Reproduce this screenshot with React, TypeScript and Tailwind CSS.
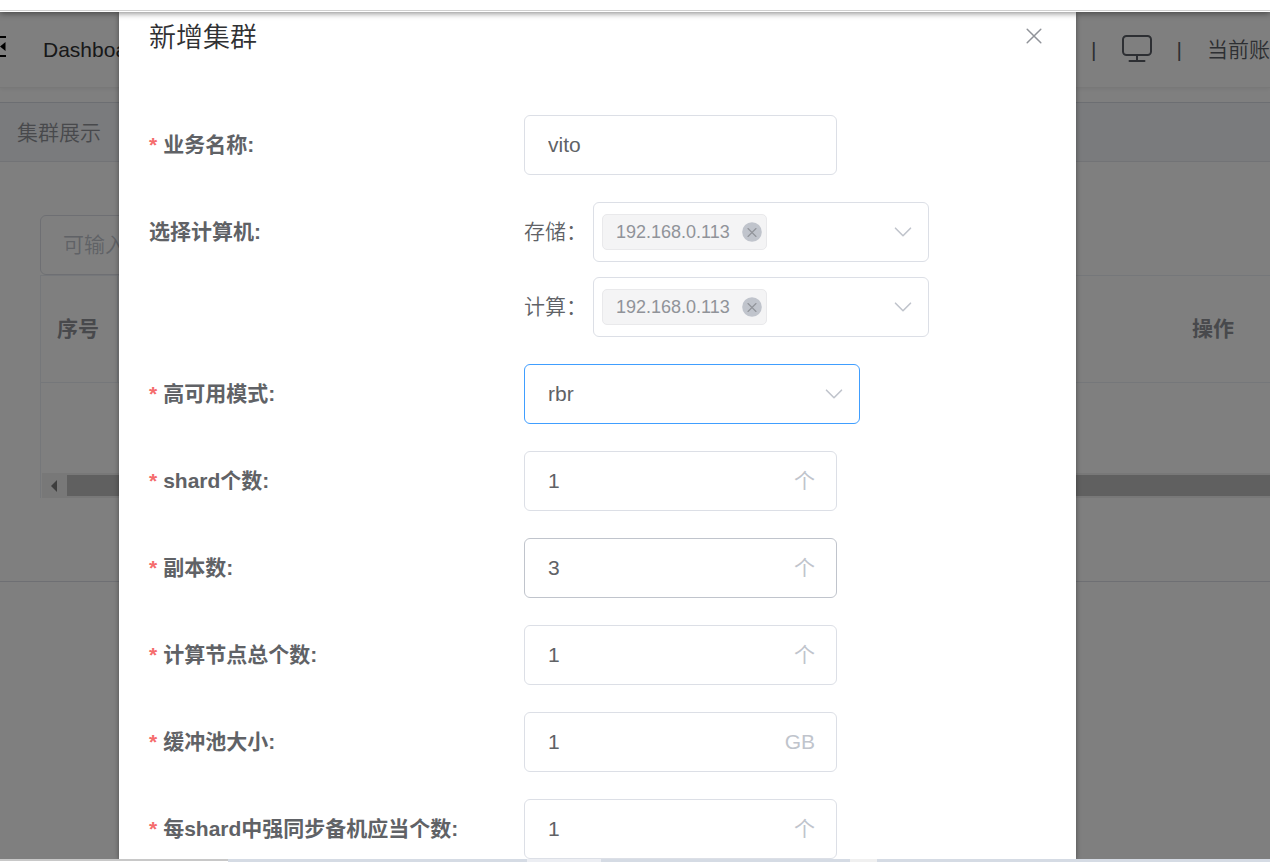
import { useState, type ReactNode } from 'react';

const ChevronDown = () => (
  <svg className="pointer-events-none h-[10px] w-[18px] shrink-0" viewBox="0 0 18 10" fill="none" stroke="#c0c4cc" strokeWidth="1.6" strokeLinecap="round" strokeLinejoin="round" aria-hidden="true">
    <path d="M1.5 1.2 9 8.7l7.5-7.5" />
  </svg>
);

const CloseIcon = () => (
  <svg className="size-4" viewBox="0 0 16 16" fill="none" stroke="#909399" strokeWidth="1.5" strokeLinecap="round" aria-hidden="true">
    <path d="M1.2 1.2l13.6 13.6M14.8 1.2 1.2 14.8" />
  </svg>
);

const TagCloseIcon = () => (
  <svg className="size-5" viewBox="0 0 20 20" fill="none" aria-hidden="true">
    <circle cx="10" cy="10" r="9.8" fill="#c0c4cc" />
    <path d="M6 6.5l8 8M14 6.5l-8 8" stroke="#909399" strokeWidth="1.1" strokeLinecap="round" />
  </svg>
);

const FoldIcon = () => (
  <svg className="h-7 w-1.5 shrink-0" viewBox="0 0 6 28" fill="#000" aria-hidden="true">
    <path d="M0 0h6v2H0zM0 19h6v2H0zM5.5 6v9L0 10.5z" />
  </svg>
);

const MonitorIcon = () => (
  <svg className="h-[30px] w-[30px] shrink-0" viewBox="0 0 30 30" fill="none" stroke="#5a5e66" strokeWidth="2" strokeLinecap="round" aria-hidden="true">
    <rect x="1" y="1" width="28" height="19" rx="3.5" />
    <path d="M15 20v6M7.5 26h15" />
  </svg>
);

type RowProps = { label: string; htmlFor?: string; required?: boolean; children: ReactNode };

function FormRow({ label, htmlFor, required, children }: RowProps) {
  return (
    <div className="flex items-start">
      <label htmlFor={htmlFor} className="w-[375px] shrink-0 font-bold leading-[60px] text-[#606266]">
        {required && <span className="mr-1.5 text-[#f56c6c]">*</span>}
        {label}
      </label>
      {children}
    </div>
  );
}

type FieldProps = { id: string; initial: string; suffix?: string; hovered?: boolean };

function Field({ id, initial, suffix, hovered }: FieldProps) {
  const [value, setValue] = useState(initial);
  return (
    <div className={`flex h-[60px] w-[313px] items-center rounded-md border bg-white pl-[23px] pr-[21px] ${hovered ? 'border-[#c0c4cc]' : 'border-[#dcdfe6]'}`}>
      <input id={id} value={value} onChange={(e) => setValue(e.target.value)} className="min-w-0 flex-1 bg-transparent text-[#606266] outline-none" />
      {suffix && <span className="font-normal text-[#c0c4cc]">{suffix}</span>}
    </div>
  );
}

function HostSelect({ id, label }: { id: string; label: string }) {
  const [hosts, setHosts] = useState(['192.168.0.113']);
  return (
    <div className="flex items-center gap-1.5">
      <label htmlFor={id} className="leading-[60px] text-[#606266]">{label}</label>
      <div className="flex h-[60px] w-[336px] items-center gap-2 rounded-md border border-[#dcdfe6] bg-white pl-2 pr-4">
        {hosts.map((host) => (
          <span key={host} className="flex h-9 shrink-0 items-center gap-3 rounded-[5px] border border-[#e9e9eb] bg-[#f4f4f5] pl-[13px] pr-1 text-[18px] text-[#909399]">
            {host}
            <button type="button" aria-label="移除" onClick={() => setHosts(hosts.filter((h) => h !== host))}>
              <TagCloseIcon />
            </button>
          </span>
        ))}
        <input id={id} className="min-w-0 flex-1 bg-transparent outline-none" />
        <ChevronDown />
      </div>
    </div>
  );
}

function ClusterPage() {
  return (
    <div className="flex h-full flex-col bg-white">
      <header className="flex h-[76px] shrink-0 items-center border-b border-[#f0f0f0] shadow-[0_1px_4px_rgba(0,21,41,0.08)]">
        <FoldIcon />
        <a href="#dashboard" className="ml-[37px] text-[#303133]">Dashboard</a>
        <div className="ml-auto flex items-center gap-[25px] whitespace-nowrap text-[#5a5e66]">
          <span>|</span>
          <MonitorIcon />
          <span>|</span>
          <span>当前账</span>
        </div>
      </header>
      <nav className="mt-[14px] flex h-[60px] shrink-0 items-center border-b border-t border-b-[#e4e7ed] border-t-[#d8dce5] bg-[#f5f7fa] pl-[17px] pt-0.5">
        <a href="#clusters" className="text-[#909399]">集群展示</a>
      </nav>
      <main className="border-b border-[#dcdfe6] pb-[83px] pl-10 pt-[53px]">
        <input aria-label="搜索" placeholder="可输入关键字搜索" className="block h-[60px] w-[400px] rounded-md border border-[#dcdfe6] px-[22px] placeholder:text-[#c0c4cc]" />
        <div className="border-l border-t border-[#ebeef5]">
          <table className="w-full table-fixed border-collapse text-left">
            <thead>
              <tr className="h-[106px] border-b border-[#ebeef5] text-[#909399]">
                <th className="w-[76px] border-r border-[#ebeef5] pl-4 font-bold">序号</th>
                <th />
                <th className="w-24 pl-[18px] font-bold">操作</th>
              </tr>
            </thead>
            <tbody>
              <tr className="h-[91px]">
                <td />
                <td />
                <td />
              </tr>
            </tbody>
          </table>
          <div className="ml-px flex h-[25px] items-center bg-[#f1f1f1] pl-[9px]">
            <svg className="h-3 w-1.5" viewBox="0 0 6 12" fill="#7d7d7d" aria-hidden="true">
              <path d="M6 0v12L0 6z" />
            </svg>
            <div className="ml-[10px] h-[21px] flex-1 bg-[#c1c1c1]" />
          </div>
        </div>
      </main>
    </div>
  );
}

function ClusterDialog() {
  const [mode, setMode] = useState('rbr');
  return (
    <section role="dialog" aria-labelledby="dialog-title" className="min-w-0 flex-1 bg-white pl-[30px] pr-[34px] pt-1.5 shadow-[0_1px_5px_rgba(0,0,0,0.4)]">
      <div className="flex items-center justify-between">
        <h2 id="dialog-title" className="pt-0.5 text-[27px] leading-9 text-[#303133]">新增集群</h2>
        <button type="button" aria-label="关闭" className="pb-0.5">
          <CloseIcon />
        </button>
      </div>
      <form className="mt-[59px] flex flex-col gap-[27px]">
        <FormRow label="业务名称:" htmlFor="name" required>
          <Field id="name" initial="vito" />
        </FormRow>
        <FormRow label="选择计算机:" htmlFor="storage">
          <div className="flex flex-col gap-[15px]">
            <HostSelect id="storage" label="存储：" />
            <HostSelect id="compute" label="计算：" />
          </div>
        </FormRow>
        <FormRow label="高可用模式:" htmlFor="mode" required>
          <div className="grid h-[60px] w-[336px] grid-cols-1 items-center rounded-md border border-[#409eff] bg-white">
            <select id="mode" value={mode} onChange={(e) => setMode(e.target.value)} className="col-start-1 row-start-1 h-full w-full appearance-none bg-transparent pl-[23px] text-[#606266] outline-none">
              <option value="rbr">rbr</option>
              <option value="mgr">mgr</option>
            </select>
            <span className="pointer-events-none col-start-1 row-start-1 mr-4 justify-self-end">
              <ChevronDown />
            </span>
          </div>
        </FormRow>
        <FormRow label="shard个数:" htmlFor="shards" required>
          <Field id="shards" initial="1" suffix="个" />
        </FormRow>
        <FormRow label="副本数:" htmlFor="replicas" required>
          <Field id="replicas" initial="3" suffix="个" hovered />
        </FormRow>
        <FormRow label="计算节点总个数:" htmlFor="nodes" required>
          <Field id="nodes" initial="1" suffix="个" />
        </FormRow>
        <FormRow label="缓冲池大小:" htmlFor="buffer" required>
          <Field id="buffer" initial="1" suffix="GB" />
        </FormRow>
        <FormRow label="每shard中强同步备机应当个数:" htmlFor="sync" required>
          <Field id="sync" initial="1" suffix="个" />
        </FormRow>
      </form>
    </section>
  );
}

export default function App() {
  return (
    <div className="flex h-screen flex-col overflow-hidden bg-white font-['Liberation_Sans','Noto_Sans_CJK_SC',sans-serif] text-[21px] font-[350] leading-[30px]">
      <div className="relative z-10 flex h-3 shrink-0 flex-col justify-end bg-white shadow-[0_1px_6px_rgba(0,0,0,0.5)]">
        <div className="mb-px h-px bg-[#d0d0d0]" />
      </div>
      <div className="relative min-h-0 flex-1 overflow-hidden">
        <ClusterPage />
        <div className="absolute inset-0 flex overflow-hidden bg-black/50 pl-[119px] pr-[194px]">
          <ClusterDialog />
        </div>
      </div>
      <footer className="flex h-[3px] shrink-0 bg-[#d5dbe4]">
        <div className="w-[228px] border-t-2 border-[#c8c8c8] bg-white" />
        <div className="ml-[299px] w-[74px] bg-[#eceef3]" />
        <div className="ml-[249px] w-[27px] bg-[#f0f0f0]" />
      </footer>
    </div>
  );
}
